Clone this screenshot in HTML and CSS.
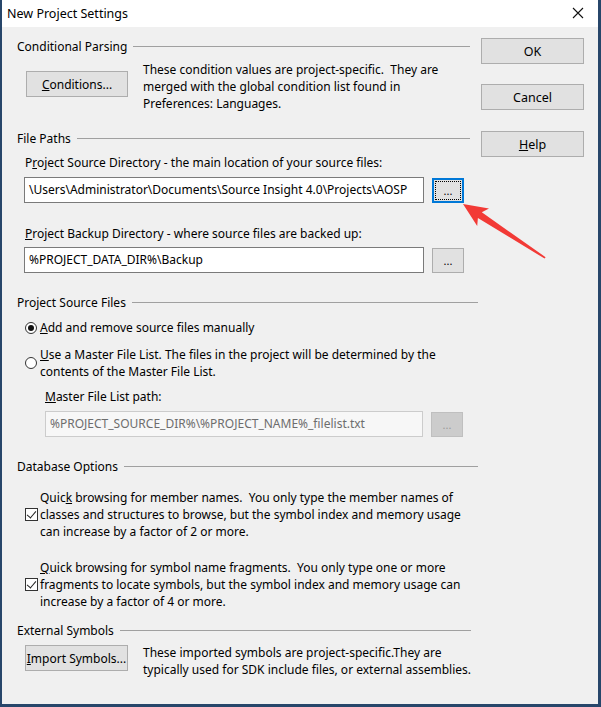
FILE: index.html
```html
<!DOCTYPE html>
<html lang="en">

<head>
    <meta charset="UTF-8">
    <title>New Project Settings</title>
    <link rel="stylesheet" href="styles.css">
</head>

<body>

    <div class="window">
        <div class="titlebar">
            <span class="title">New Project Settings</span>
            <svg class="close" width="12" height="12" viewBox="0 0 12 12">
                <path d="M1 1 L11 11 M11 1 L1 11" stroke="#111" stroke-width="1.1" fill="none"/>
            </svg>
        </div>

        <div class="client">
            <div class="main">

                <section class="group">
                    <div class="group-head head-short"><span>Conditional Parsing</span></div>
                    <div class="cmd-row">
                        <button class="btn btn-cmd btn-cond"><u>C</u>onditions...</button>
                        <p class="note">These condition values are project-specific.&nbsp; They are<br>merged with the global condition list found in<br>Preferences: Languages.</p>
                    </div>
                </section>

                <section class="group group-paths">
                    <div class="group-head head-short"><span>File Paths</span></div>
                    <div class="label label-first">P<u>r</u>oject Source Directory - the main location of your source files:</div>
                    <div class="path-row">
                        <div class="field">\Users\Administrator\Documents\Source Insight 4.0\Projects\AOSP</div>
                        <button class="btn btn-browse focused"><span>...</span></button>
                    </div>
                    <div class="label label-second"><u>P</u>roject Backup Directory - where source files are backed up:</div>
                    <div class="path-row">
                        <div class="field">%PROJECT_DATA_DIR%\Backup</div>
                        <button class="btn btn-browse"><span>...</span></button>
                    </div>
                </section>

                <section class="group group-files">
                    <div class="group-head"><span>Project Source Files</span></div>
                    <div class="option option-one">
                        <span class="radio checked"></span>
                        <span><u>A</u>dd and remove source files manually</span>
                    </div>
                    <div class="option option-two">
                        <span class="radio"></span>
                        <span><u>U</u>se a Master File List. The files in the project will be determined by the<br>contents of the Master File List.</span>
                    </div>
                    <div class="label label-master"><u>M</u>aster File List path:</div>
                    <div class="path-row master-row">
                        <div class="field field-master disabled">%PROJECT_SOURCE_DIR%\%PROJECT_NAME%_filelist.txt</div>
                        <button class="btn btn-browse disabled"><span>...</span></button>
                    </div>
                </section>

                <section class="group group-db">
                    <div class="group-head"><span>Database Options</span></div>
                    <div class="option check-one">
                        <span class="check"></span>
                        <span>Quic<u>k</u> browsing for member names.&nbsp; You only type the member names of<br>classes and structures to browse, but the symbol index and memory usage<br>can increase by a factor of 2 or more.</span>
                    </div>
                    <div class="option check-two">
                        <span class="check"></span>
                        <span><u>Q</u>uick browsing for symbol name fragments.&nbsp; You only type one or more<br>fragments to locate symbols, but the symbol index and memory usage can<br>increase by a factor of 4 or more.</span>
                    </div>
                </section>

                <section class="group group-ext">
                    <div class="group-head head-ext"><span>External Symbols</span></div>
                    <div class="cmd-row ext-row">
                        <button class="btn btn-cmd btn-import"><u>I</u>mport Symbols...</button>
                        <p class="note">These imported symbols are project-specific.They are<br>typically used for SDK include files, or external assemblies.</p>
                    </div>
                </section>

            </div>

            <div class="side">
                <button class="btn btn-side">OK</button>
                <button class="btn btn-side btn-cancel">Cancel</button>
                <button class="btn btn-side btn-help"><u>H</u>elp</button>
            </div>
        </div>

        <svg class="arrow" width="601" height="707" viewBox="0 0 601 707">
            <polygon points="463,204 489,208.5 481.8,212.3 545.6,257.2 544.6,258.6 477.9,218 477.2,226" fill="#f23a36"/>
        </svg>
    </div>

</body>

</html>
```

FILE: styles.css
```css
* {
    box-sizing: border-box;
}

body {
    margin: 0;
    padding: 0;
    font-family: "Noto Sans", sans-serif;
    font-size: 12px;
    color: #000;
    background-color: #f0f0f0;
}

.window {
    position: relative;
    width: 601px;
    height: 707px;
    background-color: #f0f0f0;
    border-left: 2px solid #27466a;
    border-right: 3px solid #27466a;
    border-bottom: 3px solid #27466a;
    overflow: hidden;
}

.titlebar {
    height: 27px;
    background-color: #fff;
    display: flex;
    align-items: center;
    justify-content: space-between;
    padding: 0 14px 1px 5px;
}

.title {
    font-size: 12.5px;
}

.close {
    display: block;
}

.client {
    display: flex;
    padding: 11px 0 0 15px;
}

.main {
    width: 461px;
}

.side {
    width: 103px;
    margin-left: 3px;
    display: flex;
    flex-direction: column;
}

/* group headers */
.group-head {
    display: flex;
    align-items: center;
    height: 17px;
    line-height: 17px;
    width: 461px;
}

.group-head::after {
    content: "";
    flex: 1;
    height: 1px;
    margin-left: 6px;
    background-color: #a0a0a0;
}

.head-short {
    width: 453px;
}

.head-ext {
    width: 454px;
}

.group-paths {
    margin-top: 18px;
}

.group-files {
    margin-top: 21px;
}

.group-db {
    margin-top: 21px;
}

.group-ext {
    margin-top: 12px;
}

/* buttons */
.btn {
    font-family: inherit;
    font-size: 12px;
    color: #000;
    background-color: #e1e1e1;
    border: 1px solid #adadad;
    padding: 0;
    margin: 0;
    height: 26px;
    display: flex;
    align-items: center;
    justify-content: center;
    flex-shrink: 0;
}

.btn-side {
    width: 103px;
    font-size: 12.5px;
}

.btn-cancel {
    margin-top: 20px;
}

.btn-help {
    margin-top: 21px;
}

.btn-cmd {
    width: 102px;
    margin-left: 9px;
    margin-top: 10px;
}

.btn-import {
    width: 103px;
    margin-left: 8px;
    margin-top: 1px;
}

.btn-browse {
    width: 32px;
    height: 25px;
    margin-left: 8px;
    margin-top: 1px;
    align-items: flex-end;
    padding-bottom: 6px;
    font-size: 11px;
    line-height: 11px;
    position: relative;
}

.btn-browse.focused {
    border: 2px solid #0078d7;
    padding-bottom: 5px;
}

.btn-browse.focused::after {
    content: "";
    position: absolute;
    left: 1px;
    top: 1px;
    right: 1px;
    bottom: 1px;
    border: 1px dotted #000;
}

.btn.disabled {
    background-color: #cccccc;
    border-color: #bfbfbf;
    color: #9a9a9a;
}

/* text rows */
.cmd-row {
    display: flex;
    align-items: flex-start;
    margin-top: 6px;
}

.ext-row {
    margin-top: 5px;
}

.note {
    margin: 0 0 0 15px;
    line-height: 17px;
}

.label {
    line-height: 17px;
    padding-left: 8px;
}

.label-first {
    margin-top: 7px;
}

.label-second {
    margin-top: 22px;
}

.label-master {
    margin-top: 8px;
    padding-left: 28px;
}

.path-row {
    display: flex;
    align-items: flex-start;
    margin-top: 6px;
    padding-left: 7px;
}

.label-second + .path-row {
    margin-top: 5px;
}

.field {
    width: 400px;
    height: 26px;
    background-color: #fff;
    border: 1px solid #7a7a7a;
    padding: 0 0 0 4px;
    line-height: 24px;
    white-space: nowrap;
    overflow: hidden;
}

.master-row {
    padding-left: 28px;
}

.field-master {
    width: 378px;
}

.field.disabled {
    background-color: #f7f7f7;
    border-color: #cccccc;
    color: #6d6d6d;
}

/* radios and checks */
.option {
    display: flex;
    align-items: center;
    line-height: 17px;
    padding-left: 8px;
}

.option-one {
    margin-top: 8px;
}

.option-two {
    margin-top: 10px;
}

.check-one {
    margin-top: 14px;
}

.check-two {
    margin-top: 19px;
}

.radio {
    width: 12px;
    height: 12px;
    border: 1px solid #333;
    border-radius: 50%;
    background-color: #fff;
    margin-right: 3px;
    flex-shrink: 0;
    display: flex;
    align-items: center;
    justify-content: center;
}

.radio.checked::after {
    content: "";
    width: 6px;
    height: 6px;
    border-radius: 50%;
    background-color: #111;
}

.check {
    width: 13px;
    height: 13px;
    border: 1px solid #333;
    background-color: #fff;
    margin-right: 2px;
    flex-shrink: 0;
    position: relative;
}

.check::after {
    content: "";
    position: absolute;
    left: 3px;
    top: 0px;
    width: 4px;
    height: 8px;
    border-right: 1px solid #222;
    border-bottom: 1px solid #222;
    transform: rotate(40deg);
}

.arrow {
    position: absolute;
    left: -2px;
    top: 0;
    pointer-events: none;
}
```
